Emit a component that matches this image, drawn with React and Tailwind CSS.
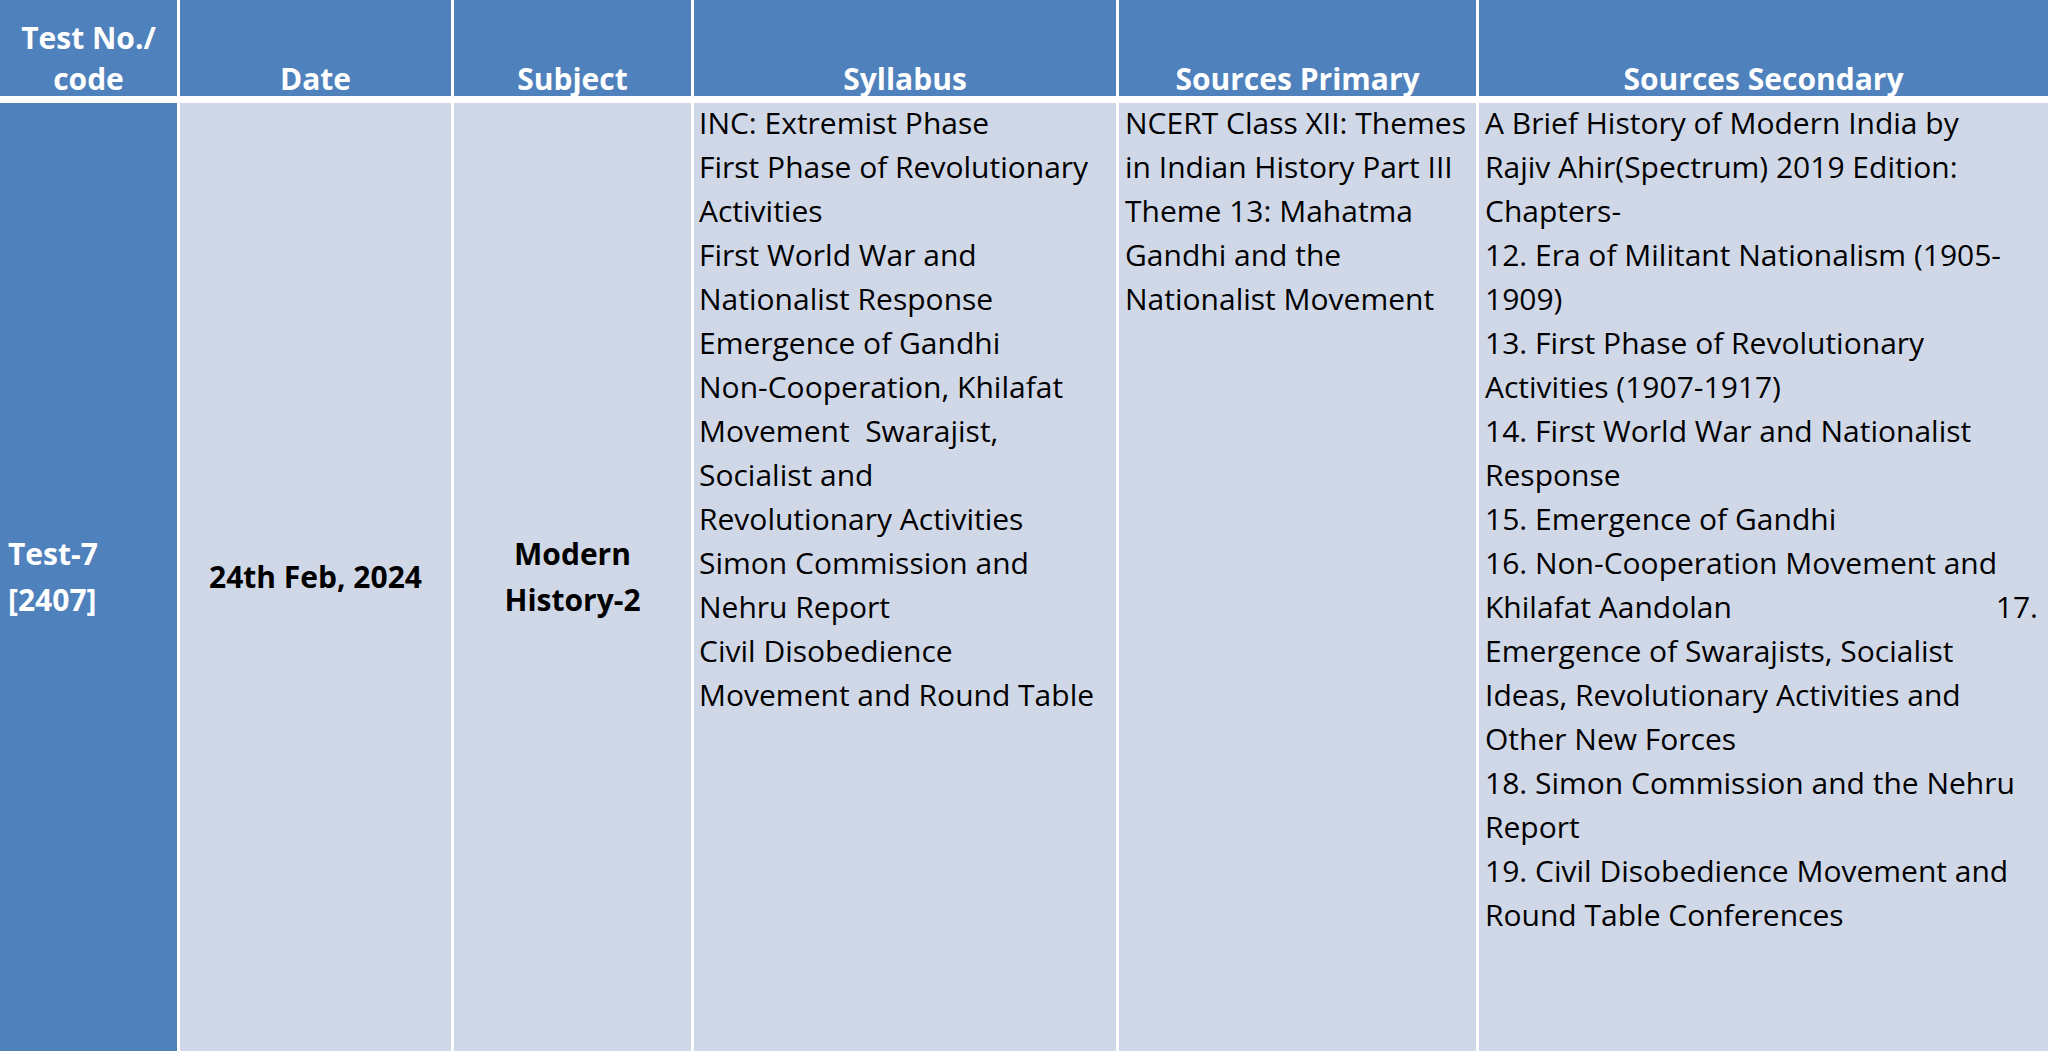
import React from "react";

const syllabus = [
  "INC: Extremist Phase",
  "First Phase of Revolutionary",
  "Activities",
  "First World War and",
  "Nationalist Response",
  "Emergence of Gandhi",
  "Non-Cooperation, Khilafat",
  "Movement\u00a0 Swarajist,",
  "Socialist and",
  "Revolutionary Activities",
  "Simon Commission and",
  "Nehru Report",
  "Civil Disobedience",
  "Movement and Round Table",
];

const primary = [
  "NCERT Class XII: Themes",
  "in Indian History Part III",
  "Theme 13: Mahatma",
  "Gandhi and the",
  "Nationalist Movement",
];

const secondary = [
  "A Brief History of Modern India by",
  "Rajiv Ahir(Spectrum) 2019 Edition:",
  "Chapters-",
  "12. Era of Militant Nationalism (1905-",
  "1909)",
  "13. First Phase of Revolutionary",
  "Activities (1907-1917)",
  "14. First World War and Nationalist",
  "Response",
  "15. Emergence of Gandhi",
  "16. Non-Cooperation Movement and",
  "__KHILAFAT__",
  "Emergence of Swarajists, Socialist",
  "Ideas, Revolutionary Activities and",
  "Other New Forces",
  "18. Simon Commission and the Nehru",
  "Report",
  "19. Civil Disobedience Movement and",
  "Round Table Conferences",
];

function Lines({ lines }) {
  return (
    <div className="flex flex-col mt-[-2px]">
      {lines.map((l, i) =>
        l === "__KHILAFAT__" ? (
          <div key={i} className="flex justify-between whitespace-nowrap leading-[44px]">
            <span>Khilafat Aandolan</span>
            <span>17.</span>
          </div>
        ) : (
          <div key={i} className="whitespace-nowrap leading-[44px]">
            {l}
          </div>
        )
      )}
    </div>
  );
}

function Head({ children }) {
  return (
    <div className="bg-[#4f81bd] flex flex-col justify-end items-center text-white font-bold text-[30px] leading-[41px] text-center">
      <div className="mb-[-3px]">{children}</div>
    </div>
  );
}

export default function App() {
  return (
    <div className="w-[2048px] h-[1054px] bg-white overflow-hidden [font-family:'Open_Sans',sans-serif] text-black">
      <div className="grid grid-cols-[177px_271px_237px_422px_357px_569px] grid-rows-[96px_948px] gap-x-[3px] gap-y-[7px]">
        <Head>
          <div>Test No./</div>
          <div>code</div>
        </Head>
        <Head>Date</Head>
        <Head>Subject</Head>
        <Head>Syllabus</Head>
        <Head>Sources Primary</Head>
        <Head>Sources Secondary</Head>

        <div className="bg-[#4f81bd] flex flex-col justify-center px-[8px] text-white font-bold text-[30px] leading-[46px]">
          <div>Test-7</div>
          <div>[2407]</div>
        </div>
        <div className="bg-[#d0d8e8] flex items-center justify-center font-bold text-[30px] leading-[46px]">
          24th Feb, 2024
        </div>
        <div className="bg-[#d0d8e8] flex flex-col items-center justify-center font-bold text-[30px] leading-[46px] text-center">
          <div>Modern</div>
          <div>History-2</div>
        </div>
        <div className="bg-[#d0d8e8] pl-[5px] pr-[4px] pt-0 text-[30px]">
          <Lines lines={syllabus} />
        </div>
        <div className="bg-[#d0d8e8] pl-[6px] pr-[2px] pt-0 text-[30px]">
          <Lines lines={primary} />
        </div>
        <div className="bg-[#d0d8e8] pl-[6px] pr-[10px] pt-0 text-[30px]">
          <Lines lines={secondary} />
        </div>
      </div>
    </div>
  );
}
